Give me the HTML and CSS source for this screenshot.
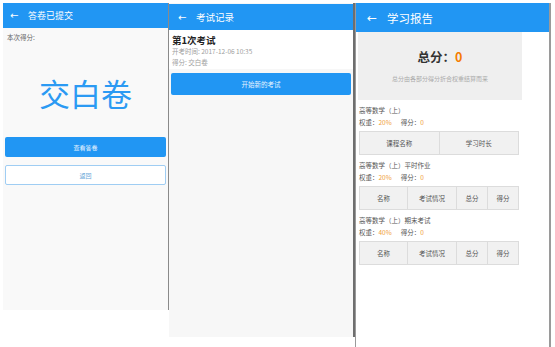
FILE: index.html
```html
<!DOCTYPE html>
<html lang="zh">
<head>
<meta charset="utf-8">
<link rel="stylesheet" href="styles.css">
</head>
<body>
<div class="collage">
  <section class="phone p1">
    <header class="bar bar1"><span class="arrow">←</span><span class="title">答卷已提交</span></header>
    <div class="p1-body">
      <div class="label">本次得分:</div>
      <div class="big">交白卷</div>
      <div class="btn btn-blue">查看答卷</div>
      <div class="btn btn-outline">返回</div>
    </div>
  </section>
  <section class="phone p2">
    <header class="bar bar2"><span class="arrow">←</span><span class="title">考试记录</span></header>
    <div class="card">
      <div class="card-title">第1次考试</div>
      <div class="card-line">开考时间: 2017-12-06 10:35</div>
      <div class="card-line">得分: 交白卷</div>
    </div>
    <div class="btn btn-blue btn-start">开始新的考试</div>
  </section>
  <section class="phone p3">
    <header class="bar bar3"><span class="arrow">←</span><span class="title">学习报告</span></header>
    <div class="summary">
      <div class="total">总分：<span class="orange">0</span></div>
      <div class="note">总分由各部分得分折合权重结算而来</div>
    </div>
    <div class="section">
      <div class="s-title">高等数学（上）</div>
      <div class="s-meta">权重：<span class="o2">20%</span><span class="gap"></span>得分：<span class="o2">0</span></div>
      <div class="table t2"><div>课程名称</div><div>学习时长</div></div>
    </div>
    <div class="section">
      <div class="s-title">高等数学（上）平时作业</div>
      <div class="s-meta">权重：<span class="o2">20%</span><span class="gap"></span>得分：<span class="o2">0</span></div>
      <div class="table t4"><div>名称</div><div>考试情况</div><div>总分</div><div>得分</div></div>
    </div>
    <div class="section">
      <div class="s-title">高等数学（上）期末考试</div>
      <div class="s-meta">权重：<span class="o2">40%</span><span class="gap"></span>得分：<span class="o2">0</span></div>
      <div class="table t4"><div>名称</div><div>考试情况</div><div>总分</div><div>得分</div></div>
    </div>
  </section>
</div>
</body>
</html>
```
FILE: styles.css
```css
* { box-sizing: border-box; margin: 0; padding: 0; }
html, body { width: 555px; height: 347px; overflow: hidden; background: #ffffff; }
body { font-family: "Noto Sans CJK SC", "Noto Sans", sans-serif; color: #444; }

.collage { display: flex; align-items: flex-start; padding-top: 3px; padding-left: 3px; }

.phone { display: flex; flex-direction: column; }

.p1 { width: 166px; height: 307px; background: #f9f9f9; border-right: 1px solid #8a8a8a; }
.p2 { width: 186px; height: 334px; background: #f7f7f7; border-right: 2px solid #6e6e6e; }
.p3 { width: 196px; height: 344px; background: #ffffff; border-left: 1px solid #9a9a9a; border-right: 2px solid #9a9a9a; margin-left: 0; }

.bar { background: #2196f3; color: #fff; display: flex; align-items: center; flex-shrink: 0; }
.bar .arrow { font-family: "DejaVu Sans", sans-serif; }
.bar1 { height: 25px; padding-left: 7px; }
.bar1 .arrow { font-size: 10px; width: 18px; }
.bar1 .title { font-size: 9px; }
.bar2 { height: 26px; padding-left: 9px; margin-top: 1px; }
.bar2 .arrow { font-size: 10px; width: 18px; }
.bar2 .title { font-size: 9.5px; }
.bar3 { height: 29px; padding-left: 11px; }
.bar3 .arrow { font-size: 12px; width: 20px; }
.bar3 .title { font-size: 11.5px; }

.p1-body { display: flex; flex-direction: column; padding: 5px 2px 0 2px; }
.label { font-size: 6.5px; color: #666; padding-left: 2px; line-height: 9px; }
.big { font-size: 31px; color: #2b9af3; text-align: center; margin-top: 31px; line-height: 40px; }
.btn { display: flex; align-items: center; justify-content: center; font-size: 6px; border-radius: 2px; }
.btn-blue { background: #2196f3; color: #e8f4ff; height: 20px; }
.p1 .btn-blue { margin-top: 24px; }
.btn-outline { background: #fff; border: 1px solid #9fcdf3; color: #6aa7d8; height: 20px; margin-top: 8px; }

.card { background: #fff; padding: 4px 3px 3px 3px; height: 39px; }
.card-title { font-size: 9.5px; font-weight: bold; color: #222; line-height: 12px; }
.card-line { font-size: 6.5px; color: #a0a0a0; line-height: 11px; }
.btn-start { margin: 4px 2px 0 2px; height: 22px; font-size: 6.5px; }

.summary { width: 164px; height: 68px; background: #efefef; margin-left: 2px; display: flex; flex-direction: column; align-items: center; padding-top: 16px; }
.total { font-size: 12.5px; font-weight: bold; color: #333; line-height: 18px; }
.orange { color: #f57c00; }
.note { font-size: 6px; color: #aaa; margin-top: 8px; }

.section { padding-left: 3px; }
.s-title { font-size: 6.5px; color: #555; line-height: 12px; margin-top: 4px; }
.section:first-of-type .s-title { margin-top: 5px; }
.s-meta { font-size: 6.5px; color: #555; line-height: 12px; }
.o2 { color: #f0a040; }
.gap { display: inline-block; width: 9px; }
.table { display: flex; width: 160px; height: 24px; margin-top: 3px; background: #f1f1f1; border: 1px solid #dcdcdc; }
.table div { display: flex; align-items: center; justify-content: center; font-size: 6.5px; color: #555; border-right: 1px solid #dcdcdc; }
.table div:last-child { border-right: none; }
.t2 div { flex: 1; }
.t4 div:nth-child(1) { width: 48px; }
.t4 div:nth-child(2) { width: 49px; }
.t4 div:nth-child(3) { width: 31px; }
.t4 div:nth-child(4) { flex: 1; }
```
